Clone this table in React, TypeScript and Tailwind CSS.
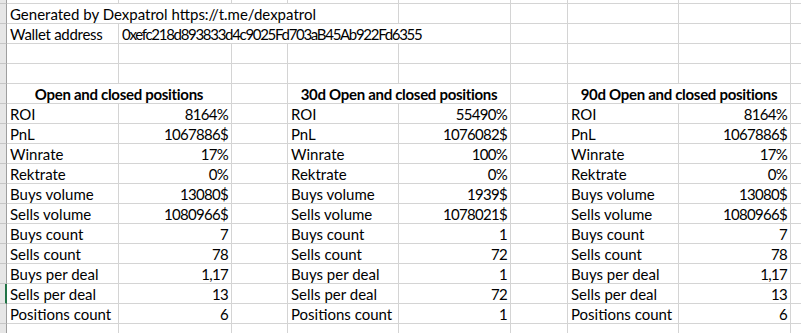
const stats = [
  {
    title: "Open and closed positions",
    rows: [
      ["ROI", "8164%"],
      ["PnL", "1067886$"],
      ["Winrate", "17%"],
      ["Rektrate", "0%"],
      ["Buys volume", "13080$"],
      ["Sells volume", "1080966$"],
      ["Buys count", "7"],
      ["Sells count", "78"],
      ["Buys per deal", "1,17"],
      ["Sells per deal", "13"],
      ["Positions count", "6"],
    ],
  },
  {
    title: "30d Open and closed positions",
    rows: [
      ["ROI", "55490%"],
      ["PnL", "1076082$"],
      ["Winrate", "100%"],
      ["Rektrate", "0%"],
      ["Buys volume", "1939$"],
      ["Sells volume", "1078021$"],
      ["Buys count", "1"],
      ["Sells count", "72"],
      ["Buys per deal", "1"],
      ["Sells per deal", "72"],
      ["Positions count", "1"],
    ],
  },
  {
    title: "90d Open and closed positions",
    rows: [
      ["ROI", "8164%"],
      ["PnL", "1067886$"],
      ["Winrate", "17%"],
      ["Rektrate", "0%"],
      ["Buys volume", "13080$"],
      ["Sells volume", "1080966$"],
      ["Buys count", "7"],
      ["Sells count", "78"],
      ["Buys per deal", "1,17"],
      ["Sells per deal", "13"],
      ["Positions count", "6"],
    ],
  },
];

// cell with excel-like gridline on right and bottom
function Cell({
  children,
  className = "",
}: {
  children?: React.ReactNode;
  className?: string;
}) {
  return (
    <div
      className={`h-full border-r border-b border-[#d4d4d4] px-[3px] flex items-end pb-[1px] whitespace-nowrap overflow-visible ${className}`}
    >
      {children}
    </div>
  );
}

function RowHead({ selected = false }: { selected?: boolean }) {
  return (
    <div
      className={`h-full bg-[#e6e6e6] border-b border-[#c6c6c6] ${
        selected ? "border-r-2 border-r-[#217346]" : "border-r border-r-[#9e9e9e]"
      }`}
    />
  );
}

export default function App() {
  const dataRows = stats[0].rows.map((_, i) => i);

  return (
    <div
      className="w-[801px] h-[333px] overflow-hidden bg-white text-black text-[15px] leading-none"
      style={{ fontFamily: "Lato, 'Noto Sans', sans-serif" }}
    >
      <div className="grid grid-cols-[7px_112px_113px_56px_111px_112px_57px_111px_112px_20px] grid-rows-[4px_repeat(17,20px)]">
        {/* top partial row */}
        <RowHead />
        {Array.from({ length: 9 }).map((_, i) => (
          <Cell key={`t${i}`} />
        ))}

        {/* row 1 */}
        <RowHead />
        <Cell className="col-span-4">Generated by Dexpatrol https://t.me/dexpatrol</Cell>
        <Cell />
        <Cell />
        <Cell />
        <Cell />
        <Cell />

        {/* row 2 */}
        <RowHead />
        <Cell className="tracking-[-0.3px]">Wallet address</Cell>
        <Cell className="col-span-4 tracking-[-1.3px]">0xefc218d893833d4c9025Fd703aB45Ab922Fd6355</Cell>
        <Cell />
        <Cell />
        <Cell />
        <Cell />

        {/* rows 3-4 empty */}
        {[0, 1].map((r) => (
          <div key={`e${r}`} className="contents">
            <RowHead />
            {Array.from({ length: 9 }).map((_, i) => (
              <Cell key={i} />
            ))}
          </div>
        ))}

        {/* headers */}
        <RowHead />
        {stats.map((s, i) => (
          <div key={s.title} className="contents">
            <Cell className="col-span-2 justify-center font-bold tracking-[-0.3px]">{s.title}</Cell>
            <Cell key={`sp${i}`} />
          </div>
        ))}

        {/* data */}
        {dataRows.map((r) => (
          <div key={`r${r}`} className="contents">
            <RowHead selected={r === 9} />
            {stats.map((s, i) => (
              <div key={i} className="contents">
                <Cell>{s.rows[r][0]}</Cell>
                <Cell className="justify-end tracking-[-0.7px]">{s.rows[r][1]}</Cell>
                <Cell />
              </div>
            ))}
          </div>
        ))}

        {/* trailing partial row */}
        <RowHead />
        {Array.from({ length: 9 }).map((_, i) => (
          <Cell key={`b${i}`} />
        ))}
      </div>
    </div>
  );
}
